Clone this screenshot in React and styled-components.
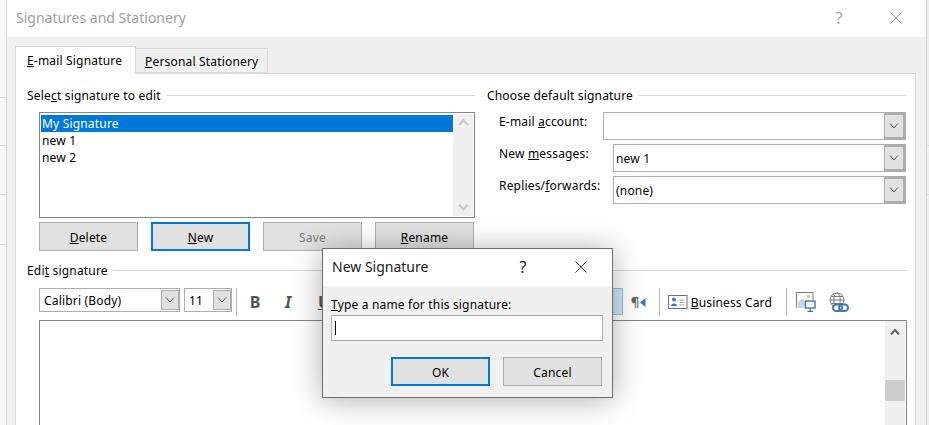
import React from "react";
import styled, { createGlobalStyle } from "styled-components";

const GlobalStyle = createGlobalStyle`
    html, body { margin: 0; padding: 0; background: #fff; }
    body {
        font-family: "Noto Sans", "Open Sans", sans-serif;
        font-size: 12px;
        letter-spacing: 0.18px;
        color: #000;
    }
`;

const Page = styled.div`
    width: 929px;
    height: 425px;
    overflow: hidden;
    position: relative;
    display: flex;
`;

const LeftEdge = styled.div`
    width: 6px;
    flex: none;
    border-right: 1px solid #dcdcdc;
    background: linear-gradient(#d8d8d8, #d8d8d8) 0 97px / 100% 1px no-repeat,
        linear-gradient(#d8d8d8, #d8d8d8) 0 145px / 100% 1px no-repeat,
        linear-gradient(#d8d8d8, #d8d8d8) 0 194px / 100% 1px no-repeat,
        linear-gradient(#d8d8d8, #d8d8d8) 0 244px / 100% 1px no-repeat,
        #f8f8f8;
`;

const RightEdge = styled.div`
    width: 3px;
    flex: none;
    border-left: 1px solid #cfcfcf;
    background: linear-gradient(#d8d8d8, #d8d8d8) 0 145px / 100% 1px no-repeat,
        linear-gradient(#d8d8d8, #d8d8d8) 0 194px / 100% 1px no-repeat,
        #f0f0f0;
`;

const Window = styled.div`
    width: 919px;
    flex: none;
    display: flex;
    flex-direction: column;
    background: #f0f0f0;
`;

const TitleBar = styled.div`
    box-sizing: border-box;
    height: 37px;
    flex: none;
    background: #fff;
    display: flex;
    align-items: center;
    padding: 0 8px 2px 9px;
`;

const Title = styled.div`
    flex: 1;
    font-size: 14px;
    letter-spacing: 0;
    color: ${p => (p.$dim ? "#a0a0a0" : "#1a1a1a")};
`;

const Help = styled.div`
    font-size: 16px;
    width: 24px;
    margin-right: ${p => p.$gap}px;
    text-align: center;
    color: ${p => (p.$dim ? "#a8a8a8" : "#222")};
`;

const CloseWrap = styled.div`
    width: ${p => p.$w}px;
    display: flex;
    justify-content: center;
    color: ${p => (p.$dim ? "#8c8c8c" : "#222")};
`;

const Body = styled.div`
    padding: 9px 10px 0 8px;
`;

const Tabs = styled.div`
    display: flex;
    align-items: flex-end;
    height: 27px;
    position: relative;
    z-index: 1;
`;

const Tab = styled.div`
    box-sizing: border-box;
    height: ${p => (p.$active ? 28 : 25)}px;
    width: ${p => (p.$active ? 121 : 132)}px;
    margin-bottom: ${p => (p.$active ? -1 : 0)}px;
    background: ${p => (p.$active ? "#fff" : "#f0f0f0")};
    border: 1px solid #d9d9d9;
    border-bottom: ${p => (p.$active ? "none" : "1px solid #d9d9d9")};
    border-left: ${p => (p.$active ? "1px solid #d9d9d9" : "none")};
    padding: ${p => (p.$active ? "6px 0 0 11px" : "5px 0 0 9px")};
    line-height: 16px;
    white-space: nowrap;
`;

const Panel = styled.div`
    box-sizing: border-box;
    height: 400px;
    background: #fff;
    border: 1px solid #d9d9d9;
    padding: 14px 8px 0 11px;
`;

const TopGrid = styled.div`
    display: grid;
    grid-template-columns: 448px 419px;
    column-gap: 12px;
`;

const GroupLabel = styled.div`
    display: flex;
    align-items: center;
    gap: 5px;
    height: 15px;
    white-space: nowrap;
    &::after {
        content: "";
        flex: 1;
        height: 1px;
        background: #d9d9d9;
    }
`;

const Indented = styled.div`
    margin-left: 12px;
`;

const ListBox = styled.div`
    box-sizing: border-box;
    height: 106px;
    margin-top: 9px;
    border: 1px solid #85858c;
    padding: 1px;
    display: flex;
`;

const ListItems = styled.div`
    flex: 1;
    padding-top: 1px;
`;

const ListItem = styled.div`
    height: 17px;
    line-height: 17px;
    padding-left: 1px;
    background: ${p => (p.$selected ? "#0078d7" : "transparent")};
    color: ${p => (p.$selected ? "#fff" : "#000")};
`;

const ScrollTrack = styled.div`
    width: 20px;
    flex: none;
    background: #f0f0f0;
    display: flex;
    flex-direction: column;
    justify-content: space-between;
    align-items: center;
    padding: 5px 0;
    box-sizing: border-box;
`;

const ButtonRow = styled.div`
    display: flex;
    gap: 13px;
    margin-top: 4px;
`;

const Button = styled.div`
    box-sizing: border-box;
    width: 99px;
    height: 29px;
    line-height: ${p => (p.$focus ? 27 : 29)}px;
    text-align: center;
    background: #e1e1e1;
    border: ${p => (p.$focus ? "2px solid #0078d7" : "1px solid #adadad")};
    color: ${p => (p.$disabled ? "#7a7a7a" : "#000")};
`;

const Rows = styled.div`
    margin-top: 9px;
    display: flex;
    flex-direction: column;
    gap: 4px;
`;

const Row = styled.div`
    display: flex;
    height: 28px;
`;

const RowLabel = styled.div`
    width: ${p => p.$w}px;
    flex: none;
    line-height: 20px;
    white-space: nowrap;
`;

const Combo = styled.div`
    box-sizing: border-box;
    flex: ${p => (p.$w ? "none" : 1)};
    width: ${p => (p.$w ? `${p.$w}px` : "auto")};
    height: ${p => (p.$small ? 24 : 28)}px;
    border: 1px solid #adadad;
    display: flex;
    align-items: center;
    padding-left: ${p => (p.$small ? 4 : 2)}px;
    background: #fff;
`;

const ComboValue = styled.div`
    flex: 1;
    white-space: nowrap;
`;

const ComboArrow = styled.div`
    box-sizing: border-box;
    flex: none;
    width: ${p => (p.$small ? 18 : 21)}px;
    height: ${p => (p.$small ? 20 : 26)}px;
    background: #e1e1e1;
    border: ${p => (p.$small ? "1px" : "2px")} solid #adadad;
    border-left-width: 1px;
    display: flex;
    align-items: center;
    justify-content: center;
`;

const EditLabel = styled(GroupLabel)`
    margin-top: 12px;
`;

const Toolbar = styled.div`
    display: flex;
    align-items: flex-start;
    height: 28px;
    margin-top: 10px;
    padding-right: 57px;
`;

const ComboGap = styled.div`
    width: 4px;
    flex: none;
`;

const Separator = styled.div`
    width: 1px;
    height: 28px;
    flex: none;
    background: #b4b4b4;
    margin: 0 ${p => p.$right || 9}px 0 ${p => p.$left || 4}px;
`;

const FormatGlyph = styled.div`
    width: ${p => p.$w}px;
    flex: none;
    height: 28px;
    line-height: 29px;
    text-align: center;
    font-size: 16px;
    letter-spacing: 0;
    font-weight: 700;
    font-style: ${p => (p.$italic ? "italic" : "normal")};
    text-decoration: ${p => (p.$under ? "underline" : "none")};
    color: #555;
`;

const Pressed = styled.div`
    box-sizing: border-box;
    width: 24px;
    height: 27px;
    flex: none;
    margin-left: auto;
    background: #cde6f7;
    border: 1px solid #92c0e0;
`;

const Pilcrow = styled.div`
    flex: none;
    width: 25px;
    margin-left: 8px;
    display: flex;
    align-items: center;
    height: 28px;
    color: #666;
    font-size: 13px;
    font-weight: 700;
    gap: 1px;
`;

const BusinessCard = styled.div`
    flex: none;
    display: flex;
    align-items: center;
    gap: 3px;
    height: 28px;
    letter-spacing: 0.15px;
    white-space: nowrap;
`;

const ToolIcon = styled.div`
    flex: none;
    height: 28px;
    margin-right: ${p => p.$right || 0}px;
    display: flex;
    align-items: center;
`;

const Editor = styled.div`
    box-sizing: border-box;
    height: 130px;
    margin-top: 4px;
    border: 1px solid #85858c;
    display: flex;
    justify-content: flex-end;
`;

const EditorScroll = styled.div`
    width: 20px;
    background: #f0f0f0;
    margin-right: 1px;
    display: flex;
    flex-direction: column;
    align-items: center;
    padding-top: 8px;
    box-sizing: border-box;
`;

const Thumb = styled.div`
    width: 100%;
    height: 21px;
    margin-top: 45px;
    background: #cdcdcd;
`;

const Modal = styled.div`
    position: absolute;
    left: 322px;
    top: 248px;
    width: 291px;
    height: 150px;
    box-sizing: border-box;
    border: 1px solid #6e6e6e;
    background: #f0f0f0;
    box-shadow: 0 2px 28px rgba(0, 0, 0, 0.32);
    z-index: 5;
`;

const ModalTitle = styled(TitleBar)`
    padding: 0 0 2px 9px;
`;

const ModalBody = styled.div`
    padding: 10px 9px 0 8px;
`;

const ModalLabel = styled.div`
    line-height: 18px;
`;

const NameInput = styled.div`
    box-sizing: border-box;
    width: 272px;
    height: 26px;
    margin-top: 1px;
    background: #fff;
    border: 1px solid #adadad;
    padding: 5px 0 0 3px;
`;

const Caret = styled.div`
    width: 1px;
    height: 14px;
    background: #000;
`;

const ModalButtons = styled.div`
    display: flex;
    justify-content: flex-end;
    gap: 13px;
    margin: 16px 1px 0 0;
`;

const Chevron = ({ up, color = "#555", size = 10, width = 1 }) => (
    <svg width={size} height={size * 0.6} viewBox="0 0 10 6" fill="none" stroke={color} strokeWidth={width}>
        <path d={up ? "M1 5.5 L5 1 L9 5.5" : "M1 .5 L5 5 L9 .5"} />
    </svg>
);

const CloseIcon = ({ size }) => (
    <svg width={size} height={size} viewBox="0 0 12 12" fill="none" stroke="currentColor" strokeWidth="0.9">
        <path d="M.5 .5 L11.5 11.5 M11.5 .5 L.5 11.5" />
    </svg>
);

const CardIcon = () => (
    <svg width="20" height="15" viewBox="0 0 20 15">
        <rect x=".5" y=".5" width="18.5" height="13" fill="#fff" stroke="#6f6f6f" />
        <circle cx="6" cy="4.6" r="2" fill="#3f77b5" />
        <path d="M3 11 C3 7.8 9 7.8 9 11 Z" fill="#3f77b5" />
        <path d="M11.5 5 H16.5 M11.5 7.5 H16.5 M11.5 10 H16.5" stroke="#a8a8a8" />
    </svg>
);

const PictureIcon = () => (
    <svg width="20" height="20" viewBox="0 0 20 20">
        <path d="M.5 16 V.5 H17 V8" fill="none" stroke="#777" />
        <path d="M2 16 V10 L6 6.5 L9 9 V16 Z" fill="#c6d6e8" />
        <rect x="11" y="3" width="3" height="3" fill="#f0bf78" />
        <rect x="9.5" y="9" width="9.5" height="7" fill="#fff" stroke="#3f77b5" strokeWidth="1.4" />
        <path d="M14.2 16 V19 M11.5 19.3 H17" stroke="#3f77b5" strokeWidth="1.2" />
    </svg>
);

const WebLinkIcon = () => (
    <svg width="21" height="21" viewBox="0 0 21 21" fill="none">
        <circle cx="8" cy="8" r="7" stroke="#777" />
        <ellipse cx="8" cy="8" rx="3.2" ry="7" stroke="#777" />
        <path d="M1 8 H15 M2 4.5 H14 M2 11.5 H14" stroke="#777" />
        <rect x="4" y="12.5" width="9" height="6.5" rx="3.2" fill="#fff" stroke="#3f77b5" strokeWidth="2" />
        <rect x="10" y="12.5" width="9" height="6.5" rx="3.2" fill="none" stroke="#3f77b5" strokeWidth="2" />
    </svg>
);

const BackTriangle = () => (
    <svg width="6" height="9" viewBox="0 0 6 9">
        <path d="M5.5 0 V9 L0 4.5 Z" fill="#3f77b5" />
    </svg>
);

const SelectBox = ({ value, w }) => (
    <Combo $w={w}>
        <ComboValue>{value}</ComboValue>
        <ComboArrow>
            <Chevron />
        </ComboArrow>
    </Combo>
);

const ToolCombo = ({ value, w }) => (
    <Combo $w={w} $small>
        <ComboValue>{value}</ComboValue>
        <ComboArrow $small>
            <Chevron />
        </ComboArrow>
    </Combo>
);

export default function App() {
    return (
        <Page>
            <GlobalStyle />
            <LeftEdge />
            <Window>
                <TitleBar>
                    <Title $dim>Signatures and Stationery</Title>
                    <Help $dim $gap={23}>?</Help>
                    <CloseWrap $dim $w={44}>
                        <CloseIcon size={12} />
                    </CloseWrap>
                </TitleBar>
                <Body>
                    <Tabs>
                        <Tab $active><u>E</u>-mail Signature</Tab>
                        <Tab><u>P</u>ersonal Stationery</Tab>
                    </Tabs>
                    <Panel>
                        <TopGrid>
                            <div>
                                <GroupLabel><span>Sele<u>c</u>t signature to edit</span></GroupLabel>
                                <Indented>
                                    <ListBox>
                                        <ListItems>
                                            <ListItem $selected>My Signature</ListItem>
                                            <ListItem>new 1</ListItem>
                                            <ListItem>new 2</ListItem>
                                        </ListItems>
                                        <ScrollTrack>
                                            <Chevron up color="#c8c8c8" size={11} width={2} />
                                            <Chevron color="#c8c8c8" size={11} width={2} />
                                        </ScrollTrack>
                                    </ListBox>
                                    <ButtonRow>
                                        <Button><u>D</u>elete</Button>
                                        <Button $focus><u>N</u>ew</Button>
                                        <Button $disabled>Save</Button>
                                        <Button><u>R</u>ename</Button>
                                    </ButtonRow>
                                </Indented>
                            </div>
                            <div>
                                <GroupLabel><span>Choose default signature</span></GroupLabel>
                                <Indented>
                                    <Rows>
                                        <Row>
                                            <RowLabel $w={104}>E-mail <u>a</u>ccount:</RowLabel>
                                            <SelectBox value="" />
                                        </Row>
                                        <Row>
                                            <RowLabel $w={114}>New <u>m</u>essages:</RowLabel>
                                            <SelectBox value="new 1" />
                                        </Row>
                                        <Row>
                                            <RowLabel $w={114}>Replies/<u>f</u>orwards:</RowLabel>
                                            <SelectBox value="(none)" />
                                        </Row>
                                    </Rows>
                                </Indented>
                            </div>
                        </TopGrid>
                        <EditLabel><span>Edi<u>t</u> signature</span></EditLabel>
                        <Indented>
                            <Toolbar>
                                <ToolCombo value="Calibri (Body)" w={141} />
                                <ComboGap />
                                <ToolCombo value="11" w={48} />
                                <Separator />
                                <FormatGlyph $w={18}>B</FormatGlyph>
                                <FormatGlyph $w={48} $italic>I</FormatGlyph>
                                <FormatGlyph $w={24} $under>U</FormatGlyph>
                                <Pressed />
                                <Pilcrow>¶<BackTriangle /></Pilcrow>
                                <Separator $left={3} $right={8} />
                                <BusinessCard>
                                    <CardIcon />
                                    <span><u>B</u>usiness Card</span>
                                </BusinessCard>
                                <Separator $left={14} />
                                <ToolIcon $right={13}><PictureIcon /></ToolIcon>
                                <ToolIcon><WebLinkIcon /></ToolIcon>
                            </Toolbar>
                            <Editor>
                                <EditorScroll>
                                    <Chevron up color="#606060" size={10} width={2} />
                                    <Thumb />
                                </EditorScroll>
                            </Editor>
                        </Indented>
                    </Panel>
                </Body>
            </Window>
            <RightEdge />
            <Modal>
                <ModalTitle>
                    <Title>New Signature</Title>
                    <Help $gap={15}>?</Help>
                    <CloseWrap $w={62}>
                        <CloseIcon size={12} />
                    </CloseWrap>
                </ModalTitle>
                <ModalBody>
                    <ModalLabel><u>T</u>ype a name for this signature:</ModalLabel>
                    <NameInput><Caret /></NameInput>
                    <ModalButtons>
                        <Button $focus>OK</Button>
                        <Button>Cancel</Button>
                    </ModalButtons>
                </ModalBody>
            </Modal>
        </Page>
    );
}
